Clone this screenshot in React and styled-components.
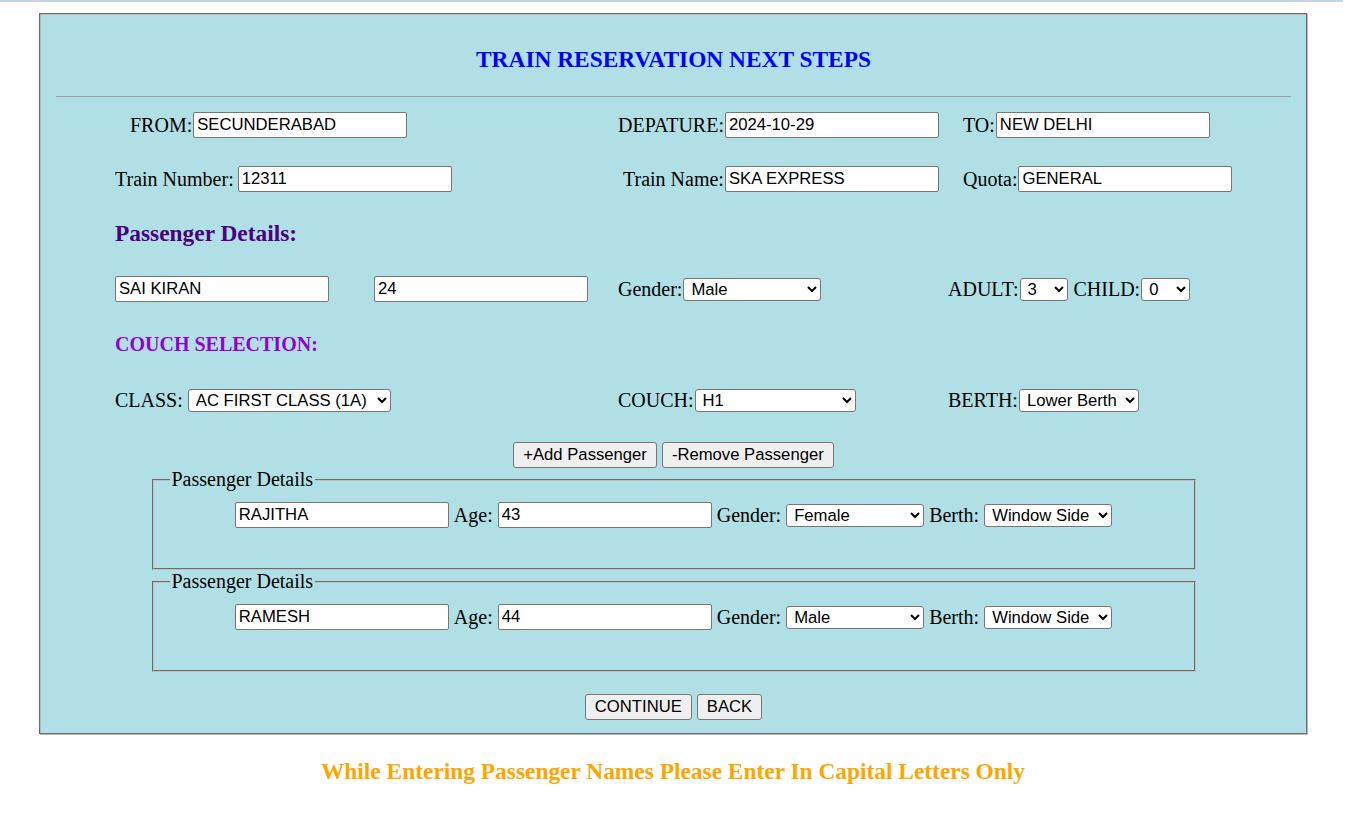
import styled, { createGlobalStyle } from 'styled-components';

const GlobalStyle = createGlobalStyle`
  body {
    margin: 0;
    background: #fff;
    color: #000;
    font-family: "Liberation Serif", "Times New Roman", serif;
  }
`;

const passengers = [
  { name: 'RAJITHA', age: '43', gender: 'Female' },
  { name: 'RAMESH', age: '44', gender: 'Male' },
];

export default function App() {
  return (
    <>
      <GlobalStyle />
      <TopStrip />
      <Panel>
        <Title>TRAIN RESERVATION NEXT STEPS</Title>
        <Rule />

        <FormArea>
          <Row $top={15}>
            <Cell $span={2} $indent={15}>
              <Field>FROM:<Input defaultValue="SECUNDERABAD" /></Field>
            </Cell>
            <Cell>
              <Field>DEPATURE:<Input defaultValue="2024-10-29" /></Field>
            </Cell>
            <Cell $indent={15}>
              <Field>TO:<Input defaultValue="NEW DELHI" /></Field>
            </Cell>
          </Row>

          <Row $top={28}>
            <Cell $span={2}>
              <Field $gap={4}>Train Number:<Input defaultValue="12311" /></Field>
            </Cell>
            <Cell $indent={5}>
              <Field>Train Name:<Input defaultValue="SKA EXPRESS" /></Field>
            </Cell>
            <Cell $indent={15}>
              <Field>Quota:<Input defaultValue="GENERAL" /></Field>
            </Cell>
          </Row>

          <SubHeading $top={28}>Passenger Details:</SubHeading>

          <Row $top={29}>
            <Cell>
              <Input defaultValue="SAI KIRAN" />
            </Cell>
            <Cell>
              <Input defaultValue="24" />
            </Cell>
            <Cell>
              <Field>
                Gender:
                <Select $w={138} defaultValue="Male">
                  <option>Male</option>
                  <option>Female</option>
                  <option>Other</option>
                </Select>
              </Field>
            </Cell>
            <Cell $gap={6}>
              <Field>
                ADULT:
                <Select $w={48} defaultValue="3">
                  <option>1</option>
                  <option>2</option>
                  <option>3</option>
                </Select>
              </Field>
              <Field>
                CHILD:
                <Select $w={49} defaultValue="0">
                  <option>0</option>
                  <option>1</option>
                  <option>2</option>
                </Select>
              </Field>
            </Cell>
          </Row>

          <SectionTitle $top={31}>COUCH SELECTION:</SectionTitle>

          <Row $top={32} $h={24}>
            <Cell $span={2}>
              <Field $gap={5}>
                CLASS:
                <Select $w={203} defaultValue="AC FIRST CLASS (1A)">
                  <option>AC FIRST CLASS (1A)</option>
                  <option>AC 2 TIER (2A)</option>
                  <option>AC 3 TIER (3A)</option>
                </Select>
              </Field>
            </Cell>
            <Cell>
              <Field>
                COUCH:
                <Select $w={161} defaultValue="H1">
                  <option>H1</option>
                  <option>A1</option>
                </Select>
              </Field>
            </Cell>
            <Cell>
              <Field>
                BERTH:
                <Select $w={120} defaultValue="Lower Berth">
                  <option>Lower Berth</option>
                  <option>Middle Berth</option>
                  <option>Upper Berth</option>
                </Select>
              </Field>
            </Cell>
          </Row>
        </FormArea>

        <ButtonBar $top={30}>
          <Button>+Add Passenger</Button>
          <Button>-Remove Passenger</Button>
        </ButtonBar>

        {passengers.map((p) => (
          <PassengerSet key={p.name}>
            <Legend>Passenger Details</Legend>
            <PassengerLine>
              <Input defaultValue={p.name} />
              <span>Age:</span>
              <Input defaultValue={p.age} />
              <span>Gender:</span>
              <Select $w={138} defaultValue={p.gender}>
                <option>Male</option>
                <option>Female</option>
              </Select>
              <span>Berth:</span>
              <Select $w={128} defaultValue="Window Side">
                <option>Window Side</option>
                <option>Aisle</option>
              </Select>
            </PassengerLine>
          </PassengerSet>
        ))}

        <ButtonBar $top={22}>
          <Button>CONTINUE</Button>
          <Button>BACK</Button>
        </ButtonBar>
      </Panel>

      <Warning>While Entering Passenger Names Please Enter In Capital Letters Only</Warning>
    </>
  );
}

const TopStrip = styled.div`
  height: 2px;
  width: 1343px;
  background: #c5d4ee;
`;

const Panel = styled.div`
  box-sizing: border-box;
  width: 1268px;
  margin: 11px 0 0 39px;
  padding: 1px 0 13px 1px;

  background: #b0e0e6;
  border: 1px solid #6d6d6d;
  box-shadow: inset 1px 1px 0 #b8b8b8, 1px 1px 0 #b8b8b8;
`;

const Title = styled.h3`
  margin: 0;
  padding-top: 31px;

  text-align: center;
  color: #0000ff;
  font-size: 23.4px;
  line-height: 27px;
  font-weight: bold;
`;

const Rule = styled.hr`
  height: 0;
  margin: 23px 15px 0;
  border: 0;
  border-top: 1px solid #9f9f9f;
`;

const FormArea = styled.div`
  padding-left: 74px;
`;

const Row = styled.div`
  display: grid;
  grid-template-columns: 259px 244px 330px 1fr;
  align-items: center;

  height: ${({ $h }) => $h || 26}px;
  margin-top: ${({ $top }) => $top}px;
`;

const Cell = styled.div`
  grid-column: span ${({ $span }) => $span || 1};
  padding-left: ${({ $indent }) => $indent || 0}px;

  display: flex;
  align-items: center;
  gap: ${({ $gap }) => $gap || 0}px;
`;

const Field = styled.label`
  display: inline-flex;
  align-items: center;
  gap: ${({ $gap }) => $gap ?? 1}px;

  font-size: 20px;
  white-space: nowrap;
`;

const Input = styled.input`
  box-sizing: border-box;
  width: ${({ $w }) => $w || 214}px;
  height: 26px;
  padding: 1px 3px;

  border: 1px solid #767676;
  border-radius: 2px;
  background: #fff;
  color: #000;
  font-family: "Liberation Sans", Arial, sans-serif;
  font-size: 16.67px;
`;

const Select = styled.select`
  box-sizing: border-box;
  width: ${({ $w }) => $w}px;
  height: 23px;
  padding: 0 0 0 3px;

  border: 1px solid #767676;
  border-radius: 3px;
  background: #fff;
  color: #000;
  font-family: "Liberation Sans", Arial, sans-serif;
  font-size: 16.67px;
`;

const SubHeading = styled.h3`
  margin: ${({ $top }) => $top}px 0 0;
  color: #4b0082;
  font-size: 23.4px;
  line-height: 27px;
  font-weight: bold;
`;

const SectionTitle = styled.h4`
  margin: ${({ $top }) => $top}px 0 0;
  color: #9400d3;
  font-size: 20px;
  line-height: 23px;
  font-weight: bold;
`;

const ButtonBar = styled.div`
  display: flex;
  justify-content: center;
  gap: 5px;
  margin-top: ${({ $top }) => $top}px;
`;

const Button = styled.button`
  height: 26px;
  padding: 0 9px;

  background: #efefef;
  border: 1px solid #767676;
  border-radius: 3px;
  color: #000;
  font-family: "Liberation Sans", Arial, sans-serif;
  font-size: 16.67px;
`;

const PassengerSet = styled.fieldset`
  box-sizing: border-box;
  width: 1044px;
  margin: 0 auto;
  padding: 0 0 40px;

  border: 2px groove #c0c0c0;
`;

const Legend = styled.legend`
  margin-left: 16px;
  padding: 0 2px;
  font-size: 20px;
  line-height: 23px;
`;

const PassengerLine = styled.div`
  display: flex;
  justify-content: center;
  align-items: center;
  gap: 5px;

  margin-top: 11px;
  font-size: 20px;
  white-space: nowrap;
`;

const Warning = styled.h3`
  width: 1268px;
  margin: 24px 0 0 39px;

  text-align: center;
  color: #ffa500;
  font-size: 23.4px;
  line-height: 27px;
  font-weight: bold;
`;
